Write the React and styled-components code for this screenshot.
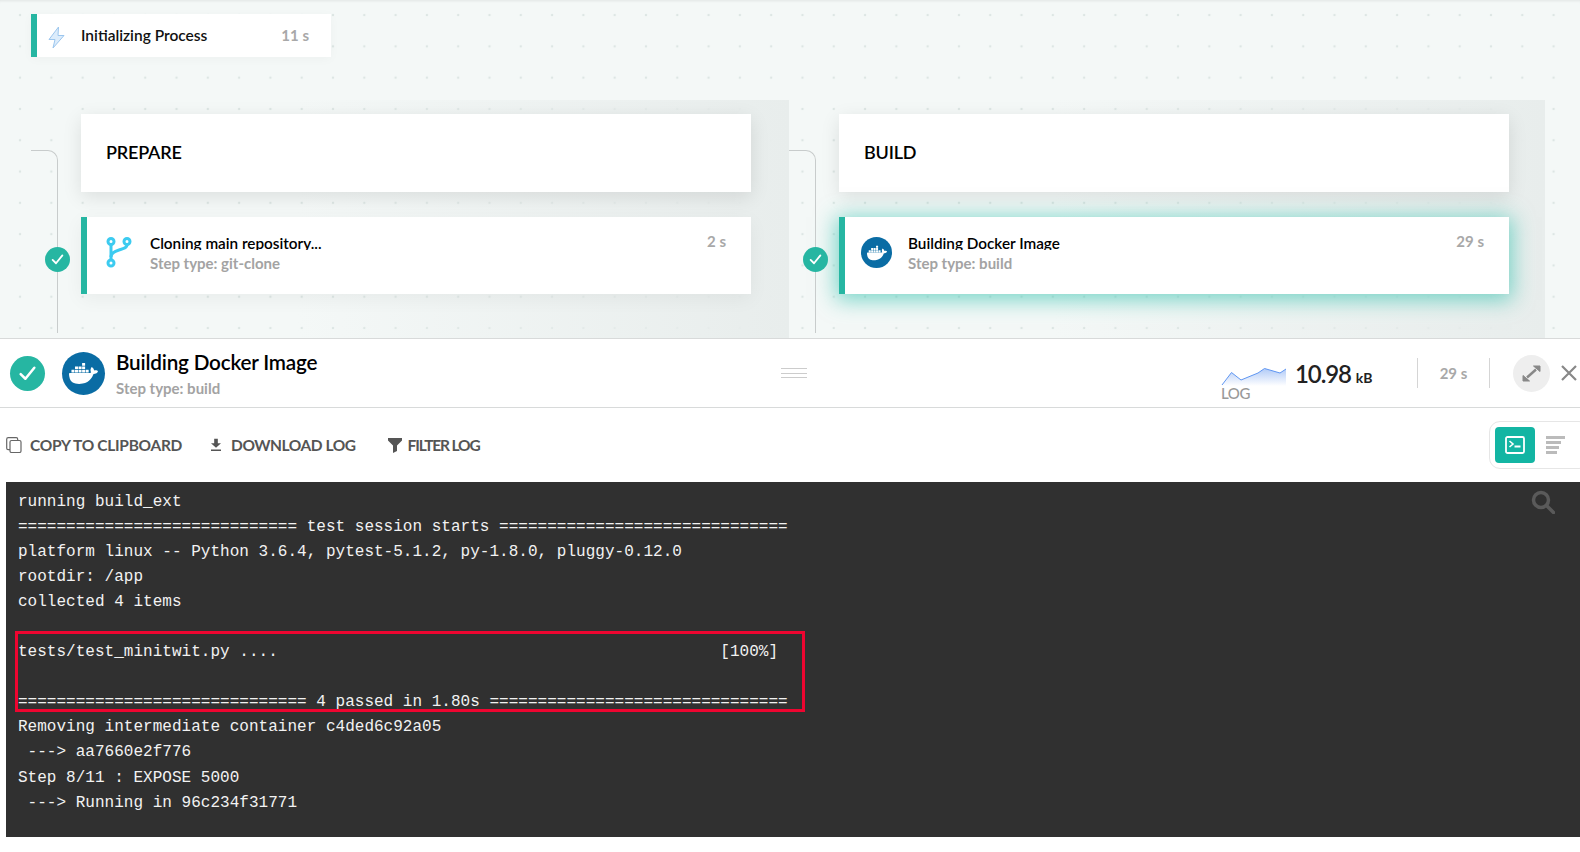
import React from "react";
import styled, { createGlobalStyle } from "styled-components";
import { SiDocker } from "react-icons/si";

const GlobalStyle = createGlobalStyle`
  html, body { margin: 0; padding: 0; background: #fff; }
  body { font-family: Lato, "Open Sans", sans-serif; color: #111; }
  * { box-sizing: border-box; }
`;

const Page = styled.div`
  width: 1580px;
  height: 852px;
  overflow: hidden;
  background: #fff;
`;

const Canvas = styled.div`
  height: 339px;
  padding-top: 14px;
  overflow: hidden;
  background-color: #f4f8f7;
  background-image: radial-gradient(circle, #dde6e4 1px, transparent 1.6px);
  background-size: 31.3px 31.3px;
  background-position: 4.4px -0.6px;
  box-shadow: inset 0 3px 3px -2px rgba(0, 0, 0, 0.08);
  border-bottom: 1px solid #d8dada;
`;

const InitCard = styled.div`
  margin-left: 31px;
  width: 300px;
  height: 43px;
  display: flex;
  align-items: center;
  padding-bottom: 2px;
  background: #fff;
  border-left: 6px solid #26b6a2;
  box-shadow: 0 2px 10px rgba(0, 0, 0, 0.03);
`;

const InitIcon = styled.svg`
  width: 17px;
  height: 23px;
  margin-left: 11px;
  margin-top: 5px;
`;

const InitTitle = styled.span`
  margin-left: 16px;
  font-size: 15.5px;
  font-weight: 600;
  color: #111;
  flex: 1;
`;

const Duration = styled.span`
  font-size: 15px;
  font-weight: 700;
  color: #a8a8a8;
`;

const InitDuration = styled(Duration)`
  margin-right: 22px;
`;

const StageRow = styled.div`
  display: grid;
  grid-template-columns: 758px 756px;
  margin-top: 43px;
  padding-left: 31px;
`;

const Stage = styled.section`
  height: 240px;
  display: flex;
  padding-top: 14px;
  background: linear-gradient(to right, rgba(232, 237, 236, 0) 35%, #e8edec 100%);
`;

const Rail = styled.div`
  position: relative;
  flex: 0 0 27px;
  height: 183px;
  margin-top: 36px;
  border-top: 1px solid #c8cccc;
  border-right: 1px solid #c8cccc;
  border-top-right-radius: 10px;
`;

const RailCheck = styled.div`
  position: absolute;
  top: 96px;
  right: -13px;
  width: 25px;
  height: 25px;
  border-radius: 50%;
  background: #26b6a2;
  display: flex;
  align-items: center;
  justify-content: center;
`;

const StageBody = styled.div`
  flex: 0 0 670px;
  margin-left: 23px;
  display: flex;
  flex-direction: column;
  gap: 25px;
`;

const StageHeader = styled.div`
  height: 78px;
  display: flex;
  align-items: center;
  padding: 0 0 3px 25px;
  background: #fff;
  font-size: 18px;
  font-weight: 600;
  letter-spacing: -0.2px;
  color: #000;
  box-shadow: 0 5px 18px rgba(0, 0, 0, 0.1);
`;

const StepCard = styled.div`
  height: 77px;
  display: flex;
  background: #fff;
  border-left: 6px solid #26b6a2;
  padding: 15px 25px 0 19px;
  box-shadow: ${(p) =>
    p.$active
      ? "0 3px 20px 3px rgba(38, 190, 170, 0.6)"
      : "0 5px 18px rgba(0, 0, 0, 0.05)"};
`;

const StepIconSlot = styled.div`
  width: 44px;
  display: flex;
  align-items: flex-start;
  margin-top: 5px;
`;

const StepDockerBadge = styled.div`
  margin-left: -3px;
`;

const StepText = styled.div`
  flex: 1;
`;

const StepTitle = styled.div`
  height: 18px;
  overflow: hidden;
  font-size: 15.3px;
  font-weight: 600;
  line-height: 22px;
  color: #000;
`;

const StepType = styled.div`
  margin-top: 3px;
  font-size: 15px;
  font-weight: 700;
  line-height: 20px;
  color: #a3a3a3;
`;

const DockerBadge = styled.div`
  width: ${(p) => p.$size}px;
  height: ${(p) => p.$size}px;
  flex: none;
  border-radius: 50%;
  background: #0a6ca4;
  color: #fff;
  display: flex;
  align-items: center;
  justify-content: center;
`;

const HeaderBar = styled.div`
  height: 69px;
  display: flex;
  align-items: center;
  border-bottom: 1px solid #d8dada;
  position: relative;
`;

const BigCheck = styled.div`
  width: 35px;
  height: 35px;
  margin-left: 10px;
  margin-right: 17px;
  flex: none;
  border-radius: 50%;
  background: #26b6a2;
  display: flex;
  align-items: center;
  justify-content: center;
`;

const HeaderText = styled.div`
  margin-left: 11px;
  width: 665px;
`;

const HeaderTitle = styled.div`
  margin-top: 1px;
  font-size: 20.7px;
  font-weight: 600;
  letter-spacing: -0.2px;
  line-height: 26px;
  color: #000;
`;

const HeaderType = styled.div`
  margin-top: 3px;
  font-size: 15px;
  font-weight: 700;
  line-height: 20px;
  color: #a3a3a3;
`;

const DragHandle = styled.div`
  width: 26px;
  height: 10px;
  border-top: 1px solid #ccc;
  border-bottom: 1px solid #ccc;
  position: relative;
  &::after {
    content: "";
    position: absolute;
    left: 0;
    right: 0;
    top: 4px;
    height: 1px;
    background: #ccc;
  }
`;

const Metrics = styled.div`
  margin-left: auto;
  display: flex;
  align-items: center;
  height: 100%;
`;

const LogSize = styled.div`
  width: 66px;
  align-self: flex-start;
  margin: 28px 8px 0 0;
  display: flex;
  flex-direction: column;
  font-size: 15px;
  font-weight: 500;
  color: #999;
`;

const SparkLabel = styled.span`
  margin-top: -2px;
  line-height: 18px;
  letter-spacing: -0.4px;
`;

const SizeValue = styled.div`
  width: 122px;
  font-size: 24px;
  font-weight: 600;
  letter-spacing: -1.1px;
  color: #222;
  white-space: nowrap;
  small {
    margin-left: 5px;
    font-size: 14px;
    font-weight: 700;
    letter-spacing: 0;
  }
`;

const Divider = styled.div`
  width: 1px;
  height: 30px;
  background: #d5d5d5;
`;

const HeaderDuration = styled(Duration)`
  width: 71px;
  text-align: center;
`;

const ExpandButton = styled.div`
  width: 37px;
  height: 37px;
  margin-left: 23px;
  border-radius: 50%;
  background: #eee;
  display: flex;
  align-items: center;
  justify-content: center;
`;

const CloseButton = styled.svg`
  width: 16px;
  height: 16px;
  margin-left: 11px;
  margin-right: 3px;
`;

const Toolbar = styled.div`
  height: 74px;
  display: flex;
  align-items: center;
  padding-left: 6px;
`;

const ToolButton = styled.div`
  display: flex;
  align-items: center;
  margin-left: ${(p) => p.$left || 0}px;
  gap: ${(p) => p.$gap || 8}px;
  font-size: 15.5px;
  font-weight: 700;
  letter-spacing: ${(p) => p.$tracking || "-0.3px"};
  color: #555;
  white-space: nowrap;
`;

const ViewToggle = styled.div`
  margin-left: auto;
  margin-right: -10px;
  width: 101px;
  height: 48px;
  padding: 5px;
  display: flex;
  align-items: center;
  border: 1px solid #e6e6e6;
  border-radius: 11px;
`;

const ViewButton = styled.div`
  width: 40px;
  height: 36px;
  display: flex;
  align-items: center;
  justify-content: center;
  border-radius: 4px;
  background: ${(p) => (p.$active ? "#13b5a3" : "transparent")};
`;

const ListIcon = styled(ViewButton)`
  width: 50px;
  padding-right: 8px;
`;

const LogPanel = styled.div`
  position: relative;
  margin-left: 6px;
  height: 355px;
  padding: 8px 0 0 12px;
  background: #303030;
  color: #f2f2f2;
  font-family: "Liberation Mono", monospace;
  font-size: 16px;
  letter-spacing: 0.02px;
  line-height: 25.05px;
  white-space: pre;
`;

const LogLine = styled.div`
  height: 25.05px;
`;

const SearchIcon = styled.svg`
  position: absolute;
  top: 8px;
  right: 25px;
  width: 24px;
  height: 24px;
`;

const Highlight = styled.div`
  position: absolute;
  left: 9px;
  top: 149px;
  width: 790px;
  height: 81px;
  border: 3px solid #ee0530;
`;

const CheckMark = ({ size }) => (
  <svg width={size} height={size} viewBox="0 0 20 20" fill="none">
    <path d="M3.5 10.5 8 15 16.5 4.5" stroke="#fff" strokeWidth="2.4" strokeLinecap="round" strokeLinejoin="round" />
  </svg>
);

const BranchIcon = () => (
  <svg width="26" height="31" viewBox="0 0 26 31" fill="none" stroke="#3ccbf0" strokeWidth="3">
    <circle cx="5" cy="4.5" r="3" />
    <circle cx="21" cy="4.5" r="3" />
    <circle cx="5" cy="26" r="3" />
    <path d="M5 7.5V23" />
    <path d="M5 20c0-4 3-5.5 8-7 5-1.500 8-2 8-5" />
  </svg>
);

const Spark = () => (
  <svg width="66" height="19" viewBox="0 0 66 19">
    <defs>
      <linearGradient id="sparkFill" x1="0" y1="0" x2="0" y2="1">
        <stop offset="0" stopColor="#9dbdf5" stopOpacity="0.8" />
        <stop offset="1" stopColor="#9dbdf5" stopOpacity="0" />
      </linearGradient>
    </defs>
    <path d="M1 18 10.500 5.500 20 13 37 6 43.500 1.500 59 6 65 2V19H1Z" fill="url(#sparkFill)" />
    <path d="M1 18 10.500 5.500 20 13 37 6 43.500 1.500 59 6 65 2" fill="none" stroke="#5f96f2" strokeWidth="1" />
  </svg>
);

const steps = [
  {
    name: "PREPARE",
    title: "Cloning main repository...",
    type: "Step type: git-clone",
    time: "2 s",
    icon: <BranchIcon />,
  },
  {
    name: "BUILD",
    title: "Building Docker Image",
    type: "Step type: build",
    time: "29 s",
    active: true,
    icon: (
      <StepDockerBadge>
        <DockerBadge $size={31}>
          <SiDocker size={20} />
        </DockerBadge>
      </StepDockerBadge>
    ),
  },
];

const logLines = [
  "running build_ext",
  "============================= test session starts ==============================",
  "platform linux -- Python 3.6.4, pytest-5.1.2, py-1.8.0, pluggy-0.12.0",
  "rootdir: /app",
  "collected 4 items",
  "",
  "tests/test_minitwit.py ....                                              [100%]",
  "",
  "============================== 4 passed in 1.80s ===============================",
  "Removing intermediate container c4ded6c92a05",
  " ---> aa7660e2f776",
  "Step 8/11 : EXPOSE 5000",
  " ---> Running in 96c234f31771",
];

export default function App() {
  return (
    <Page>
      <GlobalStyle />
      <Canvas>
        <InitCard>
          <InitIcon viewBox="0 0 17 23">
            <path d="M10.500 1 1 13.500H7L5 22 16 9.500H10Z" fill="#dcecfb" stroke="#9cc6ee" strokeWidth="1" strokeLinejoin="round" />
          </InitIcon>
          <InitTitle>Initializing Process</InitTitle>
          <InitDuration>11 s</InitDuration>
        </InitCard>
        <StageRow>
          {steps.map((s) => (
            <Stage key={s.name}>
              <Rail>
                <RailCheck>
                  <CheckMark size={15} />
                </RailCheck>
              </Rail>
              <StageBody>
                <StageHeader>{s.name}</StageHeader>
                <StepCard $active={s.active}>
                  <StepIconSlot>{s.icon}</StepIconSlot>
                  <StepText>
                    <StepTitle>{s.title}</StepTitle>
                    <StepType>{s.type}</StepType>
                  </StepText>
                  <Duration>{s.time}</Duration>
                </StepCard>
              </StageBody>
            </Stage>
          ))}
        </StageRow>
      </Canvas>

      <HeaderBar>
        <BigCheck>
          <CheckMark size={21} />
        </BigCheck>
        <DockerBadge $size={43}>
          <SiDocker size={29} />
        </DockerBadge>
        <HeaderText>
          <HeaderTitle>Building Docker Image</HeaderTitle>
          <HeaderType>Step type: build</HeaderType>
        </HeaderText>
        <DragHandle />
        <Metrics>
          <LogSize>
            <Spark />
            <SparkLabel>LOG</SparkLabel>
          </LogSize>
          <SizeValue>
            10.98<small>kB</small>
          </SizeValue>
          <Divider />
          <HeaderDuration>29 s</HeaderDuration>
          <Divider />
          <ExpandButton>
            <svg width="19" height="17" viewBox="0 0 19 17" fill="#888" stroke="#888">
              <path d="M11.500 1H18V6.500Z" strokeWidth="1" strokeLinejoin="round" />
              <path d="M7.500 16H1V10.500Z" strokeWidth="1" strokeLinejoin="round" />
              <path d="M14 4.500 5 12.500" strokeWidth="2.400" />
            </svg>
          </ExpandButton>
          <CloseButton viewBox="0 0 16 16">
            <path d="M1 1 15 15M15 1 1 15" stroke="#888" strokeWidth="2.2" />
          </CloseButton>
        </Metrics>
      </HeaderBar>

      <Toolbar>
        <ToolButton>
          <svg width="16" height="16" viewBox="0 0 16 16" fill="#fff" stroke="#666" strokeWidth="1.2">
            <rect x="0.700" y="0.700" width="11" height="12" rx="1.500" />
            <rect x="4" y="3.500" width="11" height="12" rx="1.500" />
          </svg>
          COPY TO CLIPBOARD
        </ToolButton>
        <ToolButton $left={29} $gap={10} $tracking="-0.45px">
          <svg width="10" height="14" viewBox="0 0 11 14" fill="#555">
            <path d="M3.500 0h4v5H11L5.500 10 0 5h3.500ZM0 12h11v1.500H0Z" />
          </svg>
          DOWNLOAD LOG
        </ToolButton>
        <ToolButton $left={32} $gap={6} $tracking="-1.15px">
          <svg width="14" height="15" viewBox="0 0 14 15" fill="#555">
            <path d="M0 0h14v2.500L9 7.500V13l-4 2V7.500L0 2.500Z" />
          </svg>
          FILTER LOG
        </ToolButton>
        <ViewToggle>
          <ViewButton $active>
            <svg width="20" height="18" viewBox="0 0 20 18">
              <rect x="1" y="1" width="18" height="16" rx="1.500" fill="none" stroke="#fff" strokeWidth="1.800" />
              <path d="M4.500 5 8 8 4.500 11" fill="none" stroke="#fff" strokeWidth="1.600" />
              <path d="M9.500 10.500H15.500" stroke="#fff" strokeWidth="2" />
            </svg>
          </ViewButton>
          <ListIcon>
            <svg width="19" height="18" viewBox="0 0 19 18" fill="#bbb">
              <rect width="19" height="3" />
              <rect y="5" width="15" height="3" />
              <rect y="10" width="13" height="3" />
              <rect y="15" width="11" height="3" />
            </svg>
          </ListIcon>
        </ViewToggle>
      </Toolbar>

      <LogPanel>
        {logLines.map((line, i) => (
          <LogLine key={i}>{line}</LogLine>
        ))}
        <Highlight />
        <SearchIcon viewBox="0 0 24 24" fill="none" stroke="#5a5a5a" strokeWidth="3.500">
          <circle cx="10" cy="10" r="7.500" />
          <path d="M15.500 15.500 22.500 22.500" strokeLinecap="round" />
        </SearchIcon>
      </LogPanel>
    </Page>
  );
}
